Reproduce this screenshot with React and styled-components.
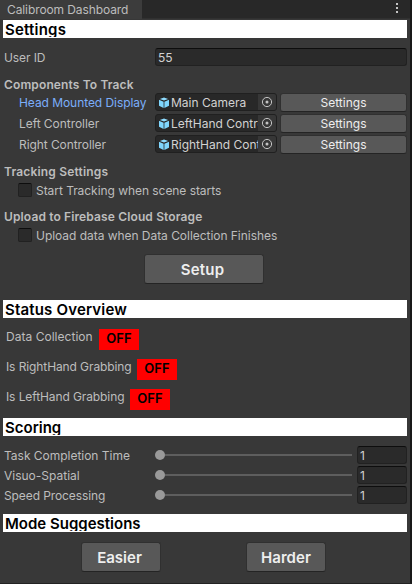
import React from "react";
import styled, { createGlobalStyle } from "styled-components";

const Global = createGlobalStyle`
  * { box-sizing: border-box; }
  body { margin: 0; background: #191919; font-family: Inter, sans-serif; font-size: 12px; color: #bdbdbd; }
`;

const Window = styled.main`
  width: 412px;
  height: 584px;
  overflow: hidden;
  background: #383838;
  border-right: 2px solid #191919;
  border-bottom: 1px solid #232323;
`;

const TabBar = styled.header`
  display: flex;
  justify-content: space-between;
  height: 19px;
  background: #282828;
  border-bottom: 1px solid #303030;
`;

const Tab = styled.div`
  width: 142px;
  height: 19px;
  padding-left: 7px;
  background: #3c3c3c;
  line-height: 19px;
  letter-spacing: -0.1px;
  white-space: nowrap;
`;

const MenuIcon = styled.svg`
  width: 4px;
  height: 12px;
  margin: 3px 11px 0 0;
  fill: #c4c4c4;
`;

const Label = styled.span`
  display: block;
  width: ${(p) => (p.$w ? `${p.$w}px` : "auto")};
  flex: none;
  white-space: nowrap;
  line-height: ${(p) => p.$lh || 20}px;
  letter-spacing: ${(p) => p.$ls || 0}px;
  color: ${(p) => (p.$active ? "#7baefa" : "#bdbdbd")};
`;

const SectionTitle = styled.h2`
  height: 18px;
  margin: ${(p) => p.$top || 0}px 3px 0;
  padding: 0 2px;
  background: #fff;
  color: #000;
  font-size: 15px;
  font-weight: 600;
  letter-spacing: ${(p) => p.$ls || 0}px;
`;

const TitleText = styled.span`
  display: block;
  height: 17px;
  overflow: hidden;
  line-height: 19px;
`;

const GroupTitle = styled.h3`
  height: 18px;
  margin: ${(p) => p.$top}px 0 0 4px;
  font-size: 12px;
  font-weight: 600;
  line-height: ${(p) => p.$lh || 18}px;
  letter-spacing: ${(p) => p.$ls || 0}px;
`;

const Row = styled.div`
  display: flex;
  height: 18px;
  margin-top: ${(p) => p.$top}px;
  padding: 0 3px 0 ${(p) => p.$indent || 4}px;
`;

const Field = styled.div`
  width: ${(p) => p.$w}px;
  height: 18px;
  padding-left: 2px;
  border: 1px solid #212121;
  border-top-color: #0d0d0d;
  border-radius: 3px;
  background: #2a2a2a;
  color: #d2d2d2;
  line-height: 17px;
`;

const ObjectField = styled.div`
  display: flex;
  width: 122px;
  height: 18px;
  border: 1px solid #202020;
  border-radius: 3px;
  background: #282828;
  overflow: hidden;
`;

const CubeSvg = styled.svg`
  flex: none;
  width: 12px;
  height: 12px;
  margin: 3px 1px 0 2px;
`;

const ObjectName = styled.span`
  width: 87px;
  overflow: hidden;
  white-space: nowrap;
  color: #d2d2d2;
  line-height: 17px;
`;

const Picker = styled.span`
  width: 18px;
  height: 16px;
  background: #373737;
  svg { display: block; margin: 2px 3px; }
`;

const Button = styled.button`
  width: ${(p) => p.$w}px;
  height: ${(p) => p.$h}px;
  margin: 0;
  padding: ${(p) => (p.$large ? `1px ${p.$shift || 0}px 0 0` : "0 0 1px")};
  border: 1px solid #303030;
  border-bottom-color: #242424;
  border-radius: 3px;
  background: #585858;
  color: #eee;
  font: ${(p) => (p.$large ? "600 15px" : "400 12px")} Inter, sans-serif;
  letter-spacing: ${(p) => p.$ls || 0}px;
`;

const RowButton = styled(Button)`
  margin-left: 3px;
  line-height: 15px;
`;

const Checkbox = styled.span`
  width: 14px;
  height: 14px;
  margin: 2px 4px 0 0;
  border: 1px solid #212121;
  border-top-color: #0d0d0d;
  border-radius: 2px;
  background: #2a2a2a;
`;

const Actions = styled.div`
  display: flex;
  margin-top: ${(p) => p.$top}px;
  padding-left: ${(p) => p.$left}px;
  gap: 85px;
`;

const StatusRow = styled.div`
  display: flex;
  height: 21px;
  margin-top: ${(p) => p.$top}px;
  padding-left: 6px;
`;

const Badge = styled.span`
  width: 40px;
  height: 21px;
  background: #f00;
  color: #000;
  font-size: 13px;
  font-weight: 600;
  line-height: 19px;
  text-align: center;
`;

const Slider = styled.div`
  display: flex;
  align-items: center;
  width: 197px;
  margin-right: 5px;
`;

const Knob = styled.span`
  width: 10px;
  height: 10px;
  border-radius: 50%;
  background: #999;
`;

const Track = styled.span`
  flex: 1;
  height: 2px;
  background: #5e5e5e;
`;

const Cube = () => (
  <CubeSvg viewBox="0 0 12 12">
    <path d="M6 .4 10.2 1.9 6 3.6 1.8 1.9Z" fill="#8fdcff" />
    <path d="M1 2.8 5.6 4.7V11L1 8.8Z" fill="#7fd6fd" />
    <path d="M11 2.8 6.4 4.7V11L11 8.8Z" fill="#7fd6fd" />
  </CubeSvg>
);

const Target = () => (
  <svg width="12" height="12" viewBox="0 0 12 12">
    <circle cx="6" cy="6" r="4.6" fill="none" stroke="#c4c4c4" />
    <circle cx="6" cy="6" r="1.5" fill="#c4c4c4" />
  </svg>
);

const Title = ({ top, ls, children }) => (
  <SectionTitle $top={top} $ls={ls}><TitleText>{children}</TitleText></SectionTitle>
);

const components = [
  { label: "Head Mounted Display", object: "Main Camera", active: true, ls: -0.06, top: 0 },
  { label: "Left Controller", object: "LeftHand Controller", ls: -0.05, top: 3 },
  { label: "Right Controller", object: "RightHand Controller", ls: -0.08, top: 3 },
];

const statuses = [
  { label: "Data Collection", w: 93, ls: 0.03, top: 11 },
  { label: "Is RightHand Grabbing", w: 131, ls: -0.1, top: 9 },
  { label: "Is LeftHand Grabbing", w: 124, ls: -0.1, top: 9 },
];

const scores = [
  { label: "Task Completion Time", ls: -0.02, top: 10 },
  { label: "Visuo-Spatial", ls: 0, top: 2 },
  { label: "Speed Processing", ls: -0.1, top: 2 },
];

export default function App() {
  return (
    <Window>
      <Global />
      <TabBar>
        <Tab>Calibroom Dashboard</Tab>
        <MenuIcon viewBox="0 0 4 12">
          <rect x="1" y="0" width="2" height="2" />
          <rect x="1" y="4" width="2" height="2" />
          <rect x="1" y="8" width="2" height="2" />
        </MenuIcon>
      </TabBar>
      <Title top={1} ls={0.2}>Settings</Title>
      <Row $top={10}>
        <Label $w={151} $ls={-0.1}>User ID</Label>
        <Field $w={252}>55</Field>
      </Row>
      <GroupTitle $top={9} $lh={19} $ls={0.13}>Components To Track</GroupTitle>
      {components.map((c) => (
        <Row key={c.label} $top={c.top} $indent={19}>
          <Label $w={136} $active={c.active} $ls={c.ls}>{c.label}</Label>
          <ObjectField>
            <Cube />
            <ObjectName>{c.object}</ObjectName>
            <Picker><Target /></Picker>
          </ObjectField>
          <RowButton $w={127} $h={19}>Settings</RowButton>
        </Row>
      ))}
      <GroupTitle $top={10} $ls={0.18}>Tracking Settings</GroupTitle>
      <Row $top={0} $indent={18}>
        <Checkbox />
        <Label $ls={-0.05}>Start Tracking when scene starts</Label>
      </Row>
      <GroupTitle $top={9} $ls={0.13}>Upload to Firebase Cloud Storage</GroupTitle>
      <Row $top={0} $indent={18}>
        <Checkbox />
        <Label $ls={-0.04}>Upload data when Data Collection Finishes</Label>
      </Row>
      <Actions $top={10} $left={144}>
        <Button $w={120} $h={30} $large $shift={3} $ls={0.2}>Setup</Button>
      </Actions>
      <Title top={16} ls={0.18}>Status Overview</Title>
      {statuses.map((s) => (
        <StatusRow key={s.label} $top={s.top}>
          <Label $w={s.w} $ls={s.ls} $lh={16}>{s.label}</Label>
          <Badge>OFF</Badge>
        </StatusRow>
      ))}
      <Title top={8}>Scoring</Title>
      {scores.map((s) => (
        <Row key={s.label} $top={s.top}>
          <Label $w={151} $ls={s.ls}>{s.label}</Label>
          <Slider><Knob /><Track /></Slider>
          <Field $w={50}>1</Field>
        </Row>
      ))}
      <Title top={10}>Mode Suggestions</Title>
      <Actions $top={10} $left={81}>
        <Button $w={80} $h={30} $large $shift={3}>Easier</Button>
        <Button $w={80} $h={30} $large $ls={0.1}>Harder</Button>
      </Actions>
    </Window>
  );
}
